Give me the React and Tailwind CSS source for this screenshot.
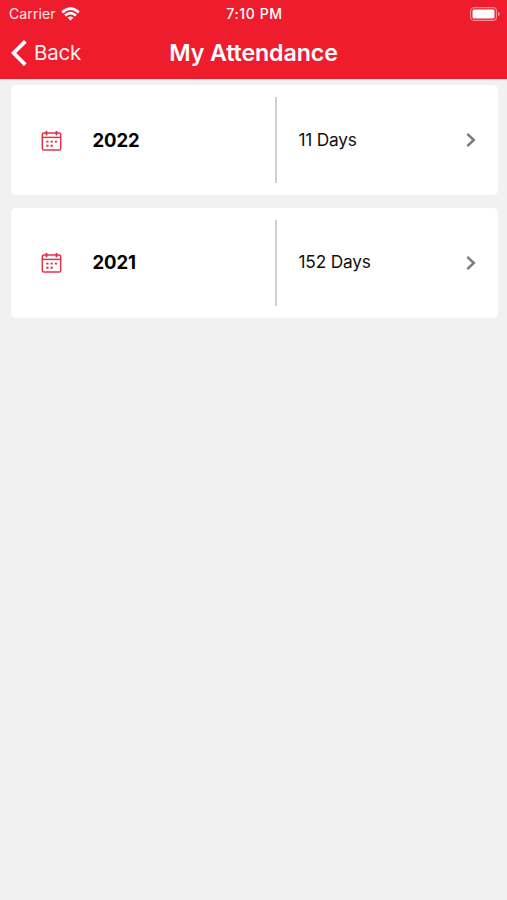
const records = [
  { year: "2022", days: "11 Days" },
  { year: "2021", days: "152 Days" },
];

function WifiIcon() {
  return (
    <svg width="19" height="14" viewBox="0 0 19 14" fill="none" stroke="white" strokeWidth="2.7">
      <path d="M1.2 5.4 Q9.5 -2 17.8 5.4" />
      <path d="M4.1 8.5 Q9.5 3.6 14.9 8.5" />
      <path d="M6.6 10.7 Q9.5 8.1 12.4 10.7 L9.5 13.6 Z" fill="white" stroke="none" />
    </svg>
  );
}

function BatteryIcon() {
  return (
    <svg width="30" height="14" viewBox="0 0 30 14" fill="none">
      <rect x="0.6" y="0.6" width="25.8" height="12.8" rx="3.4" stroke="white" strokeOpacity="0.5" strokeWidth="1.1" />
      <rect x="2.5" y="2.5" width="22" height="9" rx="1.5" fill="white" />
      <path d="M28 4.8 Q29.8 5.5 29.8 7 Q29.8 8.5 28 9.2 Z" fill="white" fillOpacity="0.5" />
    </svg>
  );
}

function CalendarIcon() {
  return (
    <svg width="21" height="21" viewBox="0 0 21 21" fill="none" stroke="#e33348" strokeWidth="1.5">
      <rect x="1.3" y="3" width="18.4" height="17" rx="1.6" />
      <path d="M1.5 7.4H19.5" />
      <path d="M5.5 1.7V4.6M15.5 1.7V4.6" strokeWidth="2" strokeLinecap="round" />
      <path d="M5.2 11.6H7.5M9.5 11.6H11.8M13.8 11.6H16.1M5.2 15.8H7.5M9.5 15.8H11.8" strokeWidth="1.9" />
    </svg>
  );
}

function AttendanceCard({ year, days }) {
  return (
    <div className="flex h-[110px] items-center rounded-[5px] bg-white pl-[30.5px] pr-[21px]">
      <CalendarIcon />
      <div className="ml-[30.5px] w-[182px] text-[18.5px] font-bold leading-none tracking-[-0.1px] text-black">{year}</div>
      <div className="h-[86px] w-[2px] bg-[#cfcfcf]" />
      <div className="ml-[22px] flex-1 pb-[2px] text-[17.3px] leading-none tracking-[-0.2px] text-[#111]">{days}</div>
      <svg width="12" height="16" viewBox="0 0 12 16" fill="none" stroke="#7c7c7c" strokeWidth="2.5">
        <path d="M2.3 1.8L8.8 8L2.3 14.2" />
      </svg>
    </div>
  );
}

export default function App() {
  return (
    <div className="min-h-screen w-full bg-[#f1f1f1] font-['Inter','Liberation_Sans',sans-serif]">
      <header className="h-[79px] bg-[#ef1c2e] text-white">
        <div className="grid h-[27px] grid-cols-[1fr_auto_1fr] items-center pl-[9px] pr-[7px]">
          <div className="flex items-center gap-[5px] text-[14px] leading-none">
            <span className="tracking-[0.1px] text-white/90">Carrier</span>
            <WifiIcon />
          </div>
          <div className="text-center text-[14px] font-medium leading-none tracking-[0.6px]">7:10 PM</div>
          <div className="flex justify-end">
            <BatteryIcon />
          </div>
        </div>
        <div className="grid h-[52px] grid-cols-[1fr_auto_1fr] items-center px-[11px]">
          <div className="flex items-center gap-[7px] text-[20.5px] leading-none">
            <svg width="16" height="26" viewBox="0 0 16 26" fill="none" stroke="white" strokeWidth="3.8">
              <path d="M14.3 1.3L2.6 13L14.3 24.7" />
            </svg>
            <span className="tracking-[-0.2px] text-white/95">Back</span>
          </div>
          <h1 className="pt-[2px] text-[23.2px] font-semibold leading-none tracking-[-0.1px]">My Attendance</h1>
          <div />
        </div>
      </header>
      <div className="h-px bg-[#f9dfe1]" />
      <main className="flex flex-col gap-[12.2px] pl-[10.5px] pr-[9.5px] pt-[5.4px]">
        {records.map((record) => (
          <AttendanceCard key={record.year} {...record} />
        ))}
      </main>
    </div>
  );
}
